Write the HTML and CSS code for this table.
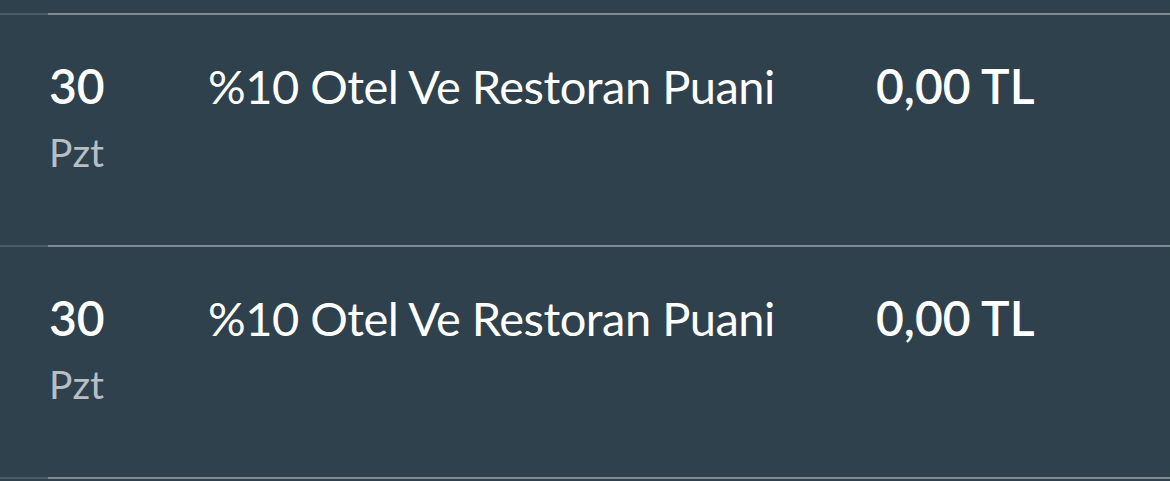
FILE: index.html
```html
<!DOCTYPE html>
<html>
<head>
<meta charset="utf-8">
<link rel="stylesheet" href="styles.css">
</head>
<body>
<div class="list">
  <div class="sep"></div>
  <div class="row">
    <div class="date"><div class="day">30</div><div class="wd">Pzt</div></div>
    <div class="desc">%10 Otel Ve Restoran Puani</div>
    <div class="amt">0,00 TL</div>
  </div>
  <div class="sep"></div>
  <div class="row">
    <div class="date"><div class="day">30</div><div class="wd">Pzt</div></div>
    <div class="desc">%10 Otel Ve Restoran Puani</div>
    <div class="amt">0,00 TL</div>
  </div>
  <div class="sep"></div>
</div>
</body>
</html>
```
FILE: styles.css
```css
html, body { margin: 0; padding: 0; }
body {
  background: #2e414d;
  width: 1170px;
  height: 481px;
  overflow: hidden;
  font-family: "Lato", "Noto Sans", sans-serif;
  color: #ffffff;
}
.list { padding-top: 13px; }
.sep {
  height: 2px;
  background: linear-gradient(to right, #4a5c68 0, #4a5c68 48px, #7d8a93 48px);
}
.row {
  display: flex;
  align-items: flex-start;
  height: 230px;
  padding-left: 49px;
  box-sizing: border-box;
  padding-top: 41px;
}
.date { width: 159px; }
.day { font-size: 48px; font-weight: 600; line-height: 60px; }
.wd { font-size: 39px; color: #b7bfc5; line-height: 48px; margin-top: 12px; }
.desc { width: 668px; font-size: 47px; letter-spacing: -0.5px; line-height: 60px; font-weight: 400; }
.amt { font-size: 48px; font-weight: 600; line-height: 60px; }
```
